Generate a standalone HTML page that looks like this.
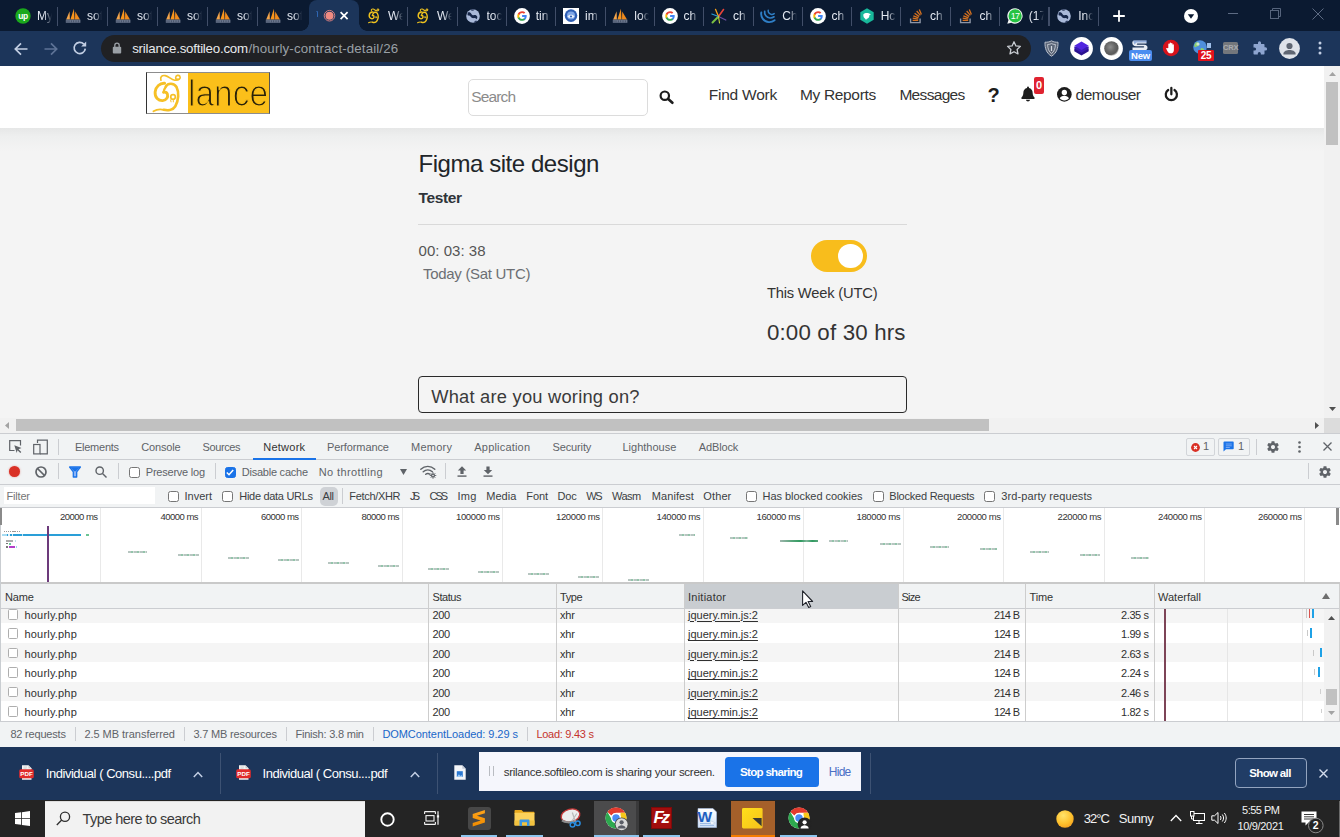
<!DOCTYPE html>
<html lang="en">
<head>
<meta charset="utf-8">
<title>Figma site design</title>
<style>
*{box-sizing:border-box;margin:0;padding:0}
html,body{width:1340px;height:837px;overflow:hidden;background:#fff}
body{position:relative;font-family:"Liberation Sans",sans-serif;font-size:12px;color:#333}
.abs{position:absolute}
svg{position:absolute;overflow:visible}
/* ===== browser chrome ===== */
#tabstrip{position:absolute;left:0;top:0;width:1340px;height:32px;background:#0b1a31}
#toolbar{position:absolute;left:0;top:31px;width:1340px;height:35px;background:#1c355a}
#omni{position:absolute;left:101px;top:35px;width:930px;height:27px;border-radius:14px;background:#202124}
.tt{position:absolute;top:7px;font-size:12px;color:#e4e9f2;white-space:nowrap;overflow:hidden;height:18px;line-height:18px;width:15px;
 -webkit-mask-image:linear-gradient(90deg,#000 0,#000 45%,transparent 100%);mask-image:linear-gradient(90deg,#000 0,#000 45%,transparent 100%)}
.sep{position:absolute;top:7px;width:1.200px;height:18.500px;background:#414e68}
.fav{position:absolute;top:8px;width:16px;height:16px}
#acttab{position:absolute;left:309px;top:0;width:50px;height:32px;background:#1c355a;border-radius:8px 8px 0 0}
#acttab:before,#acttab:after{content:"";position:absolute;bottom:1px;width:8px;height:8px}
#acttab:before{left:-8px;background:radial-gradient(circle at 0 0,transparent 7.5px,#1c355a 8px)}
#acttab:after{right:-8px;background:radial-gradient(circle at 100% 0,transparent 7.5px,#1c355a 8px)}
/* ===== page ===== */
#page{position:absolute;left:0;top:66px;width:1325px;height:352px;background:#f4f4f4;overflow:hidden}
#phead{position:absolute;left:0;top:0;width:1325px;height:62px;background:#fff}
#vscroll{position:absolute;left:1324px;top:66px;width:16px;height:352px;background:#f1f1f1}
#hscroll{position:absolute;left:0;top:418px;width:1340px;height:16px;background:#f1f1f1}
/* ===== devtools ===== */
#dev{position:absolute;left:0;top:433px;width:1340px;height:313px;background:#f3f3f3;color:#333}
/* ===== downloads ===== */
#dl{position:absolute;left:0;top:746.500px;width:1340px;height:54px;background:#1c355a}
/* ===== taskbar ===== */
#task{position:absolute;left:0;top:800px;width:1340px;height:37px;background:#242424}
</style>
</head>
<body>
<div id="tabstrip"></div>
<div id="toolbar"></div>
<div id="acttab"></div>
<svg class="fav" style="left:15px" viewBox="0 0 16 16"><circle cx="8" cy="8" r="7.7" fill="#1aa81c"/><text x="8" y="10.6" font-family="Liberation Sans,sans-serif" font-size="8.5" font-weight="700" fill="#fff" text-anchor="middle" letter-spacing="-0.4">up</text></svg><div class="tt" style="left:37px">My</div>
<svg class="fav" style="left:65px" viewBox="0 0 16 16"><path d="M1.2 11.5 L4.6 3.2 L4.9 11.5Z" fill="#f5a54a"/><path d="M5.4 11.5 L8.9 0.8 L9.6 11.5Z" fill="#f7941d"/><path d="M10 11.5 L10.2 3.6 L15 11.5Z" fill="#f08a1c"/><rect x="0.8" y="11.6" width="14.6" height="3.2" fill="#7d879c" opacity=".85"/><path d="M2 12.3v2M4 12.3v2M6.4 12.3v2M8.6 12.3v2M11 12.3v2M13.4 12.3v2" stroke="#0b1a31" stroke-width=".7" opacity=".55"/></svg><div class="tt" style="left:87px">sof</div>
<svg class="fav" style="left:115px" viewBox="0 0 16 16"><path d="M1.2 11.5 L4.6 3.2 L4.9 11.5Z" fill="#f5a54a"/><path d="M5.4 11.5 L8.9 0.8 L9.6 11.5Z" fill="#f7941d"/><path d="M10 11.5 L10.2 3.6 L15 11.5Z" fill="#f08a1c"/><rect x="0.8" y="11.6" width="14.6" height="3.2" fill="#7d879c" opacity=".85"/><path d="M2 12.3v2M4 12.3v2M6.4 12.3v2M8.6 12.3v2M11 12.3v2M13.4 12.3v2" stroke="#0b1a31" stroke-width=".7" opacity=".55"/></svg><div class="tt" style="left:137px">sof</div>
<svg class="fav" style="left:165px" viewBox="0 0 16 16"><path d="M1.2 11.5 L4.6 3.2 L4.9 11.5Z" fill="#f5a54a"/><path d="M5.4 11.5 L8.9 0.8 L9.6 11.5Z" fill="#f7941d"/><path d="M10 11.5 L10.2 3.6 L15 11.5Z" fill="#f08a1c"/><rect x="0.8" y="11.6" width="14.6" height="3.2" fill="#7d879c" opacity=".85"/><path d="M2 12.3v2M4 12.3v2M6.4 12.3v2M8.6 12.3v2M11 12.3v2M13.4 12.3v2" stroke="#0b1a31" stroke-width=".7" opacity=".55"/></svg><div class="tt" style="left:187px">sof</div>
<svg class="fav" style="left:215px" viewBox="0 0 16 16"><path d="M1.2 11.5 L4.6 3.2 L4.9 11.5Z" fill="#f5a54a"/><path d="M5.4 11.5 L8.9 0.8 L9.6 11.5Z" fill="#f7941d"/><path d="M10 11.5 L10.2 3.6 L15 11.5Z" fill="#f08a1c"/><rect x="0.8" y="11.6" width="14.6" height="3.2" fill="#7d879c" opacity=".85"/><path d="M2 12.3v2M4 12.3v2M6.4 12.3v2M8.6 12.3v2M11 12.3v2M13.4 12.3v2" stroke="#0b1a31" stroke-width=".7" opacity=".55"/></svg><div class="tt" style="left:237px">sof</div>
<svg class="fav" style="left:265px" viewBox="0 0 16 16"><path d="M1.2 11.5 L4.6 3.2 L4.9 11.5Z" fill="#f5a54a"/><path d="M5.4 11.5 L8.9 0.8 L9.6 11.5Z" fill="#f7941d"/><path d="M10 11.5 L10.2 3.6 L15 11.5Z" fill="#f08a1c"/><rect x="0.8" y="11.6" width="14.6" height="3.2" fill="#7d879c" opacity=".85"/><path d="M2 12.3v2M4 12.3v2M6.4 12.3v2M8.6 12.3v2M11 12.3v2M13.4 12.3v2" stroke="#0b1a31" stroke-width=".7" opacity=".55"/></svg><div class="tt" style="left:287px">sof</div>
<svg class="fav" style="left:366px" viewBox="120 50 620 760" fill="none" stroke="#efc21e" stroke-linecap="round" stroke-linejoin="round"><path d="M308 185C288 120 330 92 385 102C455 115 490 178 560 186C640 195 672 150 652 115C632 84 580 95 576 136" stroke-width="50"/><path d="M375 242C290 236 212 300 202 400C195 500 262 560 340 556C412 551 442 490 426 440C416 410 386 394 356 405" stroke-width="70"/><path d="M356 405C360 368 372 338 400 300" stroke-width="55"/><path d="M398 300C432 238 542 228 592 310C640 400 630 560 570 660C530 725 440 745 360 725" stroke-width="68"/><path d="M360 725C290 708 230 716 172 750" stroke-width="50"/><circle cx="528" cy="490" r="36" stroke-width="36"/></svg><div class="tt" style="left:388px">We</div>
<svg class="fav" style="left:415px" viewBox="120 50 620 760" fill="none" stroke="#efc21e" stroke-linecap="round" stroke-linejoin="round"><path d="M308 185C288 120 330 92 385 102C455 115 490 178 560 186C640 195 672 150 652 115C632 84 580 95 576 136" stroke-width="50"/><path d="M375 242C290 236 212 300 202 400C195 500 262 560 340 556C412 551 442 490 426 440C416 410 386 394 356 405" stroke-width="70"/><path d="M356 405C360 368 372 338 400 300" stroke-width="55"/><path d="M398 300C432 238 542 228 592 310C640 400 630 560 570 660C530 725 440 745 360 725" stroke-width="68"/><path d="M360 725C290 708 230 716 172 750" stroke-width="50"/><circle cx="528" cy="490" r="36" stroke-width="36"/></svg><div class="tt" style="left:437px">We</div>
<svg class="fav" style="left:464.5px" viewBox="0 0 16 16"><circle cx="8" cy="8" r="6.800" fill="#a9b9d9"/><path d="M3.200 4.300c1.600-.2 2.700.5 3.200 1.600.5 1.100 1.700 1.400 2.900 1.200 1.400-.2 2.500.4 2.900 1.500.3.900 0 1.900-.7 2.600-.5-.8-1.400-1.200-2.500-1.100-1.500.2-2.700-.3-3.300-1.400-.5-1-1.500-1.400-2.800-1.100-.6-.9-.5-2.300.3-3.300z" fill="#16274a"/><path d="M5.500 1.800c1.300-.5 2.700-.5 3.900-.1-.4.800-1.200 1.200-2.100 1.100-.8-.1-1.400-.5-1.800-1zM9.800 13c.9-.4 1.900-.3 2.600.2-.9.800-1.900 1.300-3.100 1.500-.1-.7.100-1.300.5-1.700z" fill="#16274a" opacity=".85"/></svg><div class="tt" style="left:486.5px">toc</div>
<svg class="fav" style="left:513.7px" viewBox="0 0 16 16"><circle cx="8" cy="8" r="7.900" fill="#fff"/><path d="M12.700 8.100c0-.35-.03-.68-.09-1H8.100v1.900h2.600c-.11.600-.45 1.110-.96 1.450v1.200h1.550c.91-.84 1.410-2.070 1.410-3.550z" fill="#4285f4"/><path d="M8.100 12.800c1.300 0 2.380-.43 3.180-1.150l-1.550-1.200c-.43.290-.98.460-1.630.460-1.250 0-2.310-.85-2.690-1.980H3.800v1.240c.79 1.570 2.410 2.630 4.300 2.630z" fill="#34a853"/><path d="M5.410 8.930c-.1-.29-.15-.6-.15-.93s.05-.64.150-.93V5.830H3.800c-.33.650-.51 1.390-.51 2.170s.18 1.520.51 2.170l1.610-1.240z" fill="#fbbc05"/><path d="M8.100 5.090c.71 0 1.340.24 1.840.72l1.380-1.380C10.480 3.650 9.400 3.200 8.100 3.200c-1.890 0-3.510 1.060-4.300 2.630l1.610 1.240c.38-1.130 1.440-1.980 2.690-1.980z" fill="#ea4335"/></svg><div class="tt" style="left:535.7px">tin</div>
<svg class="fav" style="left:563px" viewBox="0 0 16 16"><rect x="0" y="0" width="16" height="16" fill="#fff"/><circle cx="8" cy="7.600" r="6.300" fill="#2f5fb5"/><circle cx="8" cy="7.600" r="4" fill="#7fa6e6"/><path d="M4.500 8.500c1.500-2.500 5.500-2.500 7 0-1.500 2-5.500 2-7 0z" fill="#e9f0fb"/><circle cx="8" cy="8.500" r="1.100" fill="#2f5fb5"/></svg><div class="tt" style="left:585px">im</div>
<svg class="fav" style="left:612.3px" viewBox="0 0 16 16"><path d="M1.2 11.5 L4.6 3.2 L4.9 11.5Z" fill="#f5a54a"/><path d="M5.4 11.5 L8.9 0.8 L9.6 11.5Z" fill="#f7941d"/><path d="M10 11.5 L10.2 3.6 L15 11.5Z" fill="#f08a1c"/><rect x="0.8" y="11.6" width="14.6" height="3.2" fill="#7d879c" opacity=".85"/><path d="M2 12.3v2M4 12.3v2M6.4 12.3v2M8.6 12.3v2M11 12.3v2M13.4 12.3v2" stroke="#0b1a31" stroke-width=".7" opacity=".55"/></svg><div class="tt" style="left:634.3px">loc</div>
<svg class="fav" style="left:661.5px" viewBox="0 0 16 16"><circle cx="8" cy="8" r="7.900" fill="#fff"/><path d="M12.700 8.100c0-.35-.03-.68-.09-1H8.100v1.900h2.600c-.11.600-.45 1.110-.96 1.450v1.200h1.550c.91-.84 1.410-2.070 1.410-3.550z" fill="#4285f4"/><path d="M8.100 12.800c1.300 0 2.380-.43 3.180-1.150l-1.550-1.200c-.43.290-.98.460-1.630.460-1.250 0-2.310-.85-2.690-1.980H3.800v1.240c.79 1.570 2.410 2.630 4.300 2.630z" fill="#34a853"/><path d="M5.410 8.930c-.1-.29-.15-.6-.15-.93s.05-.64.150-.93V5.830H3.800c-.33.650-.51 1.390-.51 2.170s.18 1.520.51 2.170l1.610-1.240z" fill="#fbbc05"/><path d="M8.100 5.090c.71 0 1.340.24 1.840.72l1.380-1.380C10.480 3.650 9.400 3.200 8.100 3.200c-1.890 0-3.510 1.060-4.300 2.630l1.610 1.240c.38-1.130 1.440-1.980 2.690-1.980z" fill="#ea4335"/></svg><div class="tt" style="left:683.5px">ch</div>
<svg class="fav" style="left:711px" viewBox="0 0 16 16" fill="none" stroke-linecap="round"><path d="M7.500 8.500L1.500 14.500" stroke="#7ac143" stroke-width="2"/><path d="M7.500 8.500L14.800 12" stroke="#6b4fa0" stroke-width="1.300"/><path d="M7.500 8.500L12.500 1.500" stroke="#e8443a" stroke-width="1.600"/><path d="M7.500 8.500L4.500 1.300" stroke="#f6a01a" stroke-width="1.300"/><path d="M7.500 8.500L0.800 6" stroke="#2a9fd8" stroke-width="1.100"/><path d="M7.500 8.500L8.500 15" stroke="#c6d93b" stroke-width="1.100"/></svg><div class="tt" style="left:733px">ch</div>
<svg class="fav" style="left:760.3px" viewBox="0 0 16 16" fill="none" stroke="#2f7fc6" stroke-linecap="round"><path d="M1.300 4.500c-.9 4.500 2.500 9.300 7.400 9.600 2.300.2 4.300-.6 5.900-1.900" stroke-width="1.900"/><path d="M4.700 3.300c-.6 3.300 1.900 6.400 5.200 6.700 1.500.1 2.900-.3 4.100-1.200" stroke-width="1.700"/><path d="M8.200 2.300c-.3 2.100 1.300 3.900 3.300 4.100 1 .1 1.900-.2 2.700-.8" stroke-width="1.500"/></svg><div class="tt" style="left:782.3px">Ch</div>
<svg class="fav" style="left:809.5px" viewBox="0 0 16 16"><circle cx="8" cy="8" r="7.900" fill="#fff"/><path d="M12.700 8.100c0-.35-.03-.68-.09-1H8.100v1.900h2.600c-.11.600-.45 1.110-.96 1.450v1.200h1.550c.91-.84 1.410-2.070 1.410-3.550z" fill="#4285f4"/><path d="M8.100 12.800c1.300 0 2.380-.43 3.180-1.150l-1.550-1.200c-.43.290-.98.460-1.630.460-1.250 0-2.310-.85-2.690-1.980H3.800v1.240c.79 1.570 2.410 2.630 4.300 2.630z" fill="#34a853"/><path d="M5.410 8.930c-.1-.29-.15-.6-.15-.93s.05-.64.150-.93V5.830H3.800c-.33.650-.51 1.390-.51 2.170s.18 1.520.51 2.170l1.610-1.240z" fill="#fbbc05"/><path d="M8.100 5.090c.71 0 1.340.24 1.840.72l1.380-1.380C10.480 3.650 9.400 3.200 8.100 3.200c-1.890 0-3.510 1.060-4.300 2.630l1.610 1.240c.38-1.130 1.440-1.980 2.690-1.980z" fill="#ea4335"/></svg><div class="tt" style="left:831.5px">ch</div>
<svg class="fav" style="left:858.7px" viewBox="0 0 16 16"><path d="M8 .3l6.700 3.850v7.700L8 15.700 1.300 11.850v-7.700z" fill="#18b89b"/><path d="M4.300 6.400c1.300-1.400 3.600-1.800 5.300-1.100l2.300.9-1.500 1c.2 1.900-1.100 3.500-3 3.800l-.2 1.300-1-1.600c-1.200-.7-2-2.300-1.900-4.300z" fill="#fff"/></svg><div class="tt" style="left:880.7px">Hc</div>
<svg class="fav" style="left:908px" viewBox="0 0 16 16" fill="none"><path d="M2.600 10.400v4.200h9.500v-4.200" stroke="#8d95a6" stroke-width="1.400"/><path d="M4.600 12.400h5.600" stroke="#d5711f" stroke-width="1.300"/><path d="M4.700 10.200l5.500.9" stroke="#d5711f" stroke-width="1.300"/><path d="M5.300 7.800l5.200 2.100" stroke="#d5711f" stroke-width="1.300"/><path d="M6.600 5.300l4.600 3.300" stroke="#d5711f" stroke-width="1.300"/><path d="M8.700 3l3.700 4.400" stroke="#d5711f" stroke-width="1.300"/><path d="M11.300 1.400l2.100 5.200" stroke="#d5711f" stroke-width="1.300"/></svg><div class="tt" style="left:930px">ch</div>
<svg class="fav" style="left:957.5px" viewBox="0 0 16 16" fill="none"><path d="M2.600 10.400v4.200h9.500v-4.200" stroke="#8d95a6" stroke-width="1.400"/><path d="M4.600 12.400h5.600" stroke="#d5711f" stroke-width="1.300"/><path d="M4.700 10.200l5.500.9" stroke="#d5711f" stroke-width="1.300"/><path d="M5.300 7.800l5.200 2.100" stroke="#d5711f" stroke-width="1.300"/><path d="M6.600 5.300l4.600 3.300" stroke="#d5711f" stroke-width="1.300"/><path d="M8.700 3l3.700 4.400" stroke="#d5711f" stroke-width="1.300"/><path d="M11.300 1.400l2.100 5.200" stroke="#d5711f" stroke-width="1.300"/></svg><div class="tt" style="left:979.5px">ch</div>
<svg class="fav" style="left:1006.8px" viewBox="0 0 16 16"><path d="M8.100.2a7.700 7.700 0 0 0-6.600 11.700L.3 15.800l4-1.100A7.700 7.700 0 1 0 8.100.2z" fill="#f2f5f3"/><circle cx="8.100" cy="7.900" r="6.600" fill="#25c343"/><text x="8.100" y="10.700" font-family="Liberation Sans,sans-serif" font-size="9" fill="#fff" text-anchor="middle" letter-spacing="-0.6">17</text></svg><div class="tt" style="left:1028.8px">(17</div>
<svg class="fav" style="left:1056.2px" viewBox="0 0 16 16"><circle cx="8" cy="8" r="6.800" fill="#a9b9d9"/><path d="M3.200 4.300c1.600-.2 2.700.5 3.200 1.600.5 1.100 1.700 1.400 2.900 1.200 1.400-.2 2.500.4 2.900 1.500.3.900 0 1.900-.7 2.600-.5-.8-1.400-1.200-2.500-1.100-1.500.2-2.700-.3-3.300-1.400-.5-1-1.500-1.400-2.800-1.100-.6-.9-.5-2.300.3-3.300z" fill="#16274a"/><path d="M5.500 1.800c1.300-.5 2.700-.5 3.900-.1-.4.800-1.200 1.200-2.100 1.100-.8-.1-1.400-.5-1.800-1zM9.800 13c.9-.4 1.900-.3 2.600.2-.9.800-1.900 1.300-3.100 1.500-.1-.7.100-1.300.5-1.700z" fill="#16274a" opacity=".85"/></svg><div class="tt" style="left:1078.2px">Inc</div>
<div class="sep" style="left:57.2px"></div><div class="sep" style="left:107.2px"></div><div class="sep" style="left:157.2px"></div><div class="sep" style="left:207.2px"></div><div class="sep" style="left:257.2px"></div><div class="sep" style="left:407.2px"></div><div class="sep" style="left:456.7px"></div><div class="sep" style="left:505.9px"></div><div class="sep" style="left:555.2px"></div><div class="sep" style="left:604.5px"></div><div class="sep" style="left:653.7px"></div><div class="sep" style="left:703.2px"></div><div class="sep" style="left:752.5px"></div><div class="sep" style="left:801.7px"></div><div class="sep" style="left:850.9px"></div><div class="sep" style="left:900.2px"></div><div class="sep" style="left:949.7px"></div><div class="sep" style="left:999.0px"></div><div class="sep" style="left:1048.4px"></div><div class="sep" style="left:1097.7px"></div>
<div class="abs" style="left:316.600px;top:10.700px;width:1.700px;height:6.300px;background:#2f66b3;border-radius:.5px"></div><div class="abs" style="left:315.800px;top:10.700px;width:1.500px;height:1.500px;background:#2f66b3;opacity:.6"></div>
<svg style="left:322px;top:8px;width:16px;height:16px" viewBox="0 0 16 16"><circle cx="7.500" cy="7.700" r="5.300" fill="none" stroke="#d97e80" stroke-width="1"/><circle cx="7.500" cy="7.700" r="4" fill="#f28b82"/></svg>
<svg style="left:336px;top:8px;width:16px;height:16px" viewBox="0 0 16 16"><path d="M4.600 4.200l7 7M11.600 4.200l-7 7" stroke="#fff" stroke-width="1.700" fill="none"/></svg>
<svg style="left:1112px;top:9px;width:14px;height:14px" viewBox="0 0 14 14"><path d="M7 1.200v11.600M1.200 7h11.600" stroke="#fff" stroke-width="1.800" fill="none"/></svg>
<svg style="left:1184px;top:9px;width:14px;height:14px" viewBox="0 0 14 14"><circle cx="7" cy="7" r="7" fill="#fff"/><path d="M3.800 5.300h6.400L7 9.700z" fill="#0b1a31"/></svg>
<div class="abs" style="left:1228px;top:13px;width:10px;height:1px;background:#5d6b83"></div>
<svg style="left:1270px;top:8px;width:11px;height:11px" viewBox="0 0 11 11" fill="none" stroke="#56647c" stroke-width="1"><rect x=".5" y="2.500" width="8" height="8"/><path d="M2.500 2.500v-2h8v8h-2"/></svg>
<svg style="left:1312px;top:8px;width:12px;height:12px" viewBox="0 0 12 12"><path d="M.5.500l11 11M11.500.500l-11 11" stroke="#5d6b83" stroke-width="1" fill="none"/></svg>
<svg style="left:13px;top:41px;width:16px;height:16px" viewBox="0 0 16 16" fill="none" stroke="#c3cfe4" stroke-width="1.700"><path d="M14.500 8H2.500M8 2.300L2.300 8 8 13.700"/></svg>
<svg style="left:43px;top:41px;width:16px;height:16px" viewBox="0 0 16 16" fill="none" stroke="#5e7396" stroke-width="1.700"><path d="M1.500 8h12M8 2.300L13.700 8 8 13.700"/></svg>
<svg style="left:72px;top:40px;width:16px;height:16px" viewBox="0 0 16 16" fill="none"><path d="M13.300 8.600A5.600 5.600 0 1 1 11.800 4.100" stroke="#c3cfe4" stroke-width="1.700"/><path d="M14.200 1.600v5h-5z" fill="#c3cfe4"/></svg>
<div id="omni"></div>
<svg style="left:112px;top:42px;width:10px;height:12px" viewBox="0 0 10 12"><rect x=".8" y="4.800" width="8.400" height="6.700" rx="1" fill="#9aa0a6"/><path d="M2.800 5V3.400a2.200 2.200 0 0 1 4.400 0V5" stroke="#9aa0a6" stroke-width="1.300" fill="none"/></svg>
<div class="abs" style="left:132.2px;top:38.6px;font-size:13.3px;line-height:19px;height:19px;color:#e8eaed;white-space:nowrap;letter-spacing:-0.23px;">srilance.softileo.com</div><div class="abs" style="left:248.5px;top:38.6px;font-size:13.3px;line-height:19px;height:19px;color:#9aa0a6;white-space:nowrap;letter-spacing:0.13px;">/hourly-contract-detail/26</div>
<svg style="left:1006px;top:40px;width:16px;height:16px" viewBox="0 0 16 16"><path d="M8 1.800l1.900 4.100 4.500.5-3.300 3.100.9 4.400L8 11.700 4 13.900l.9-4.400L1.600 6.400l4.500-.5z" fill="none" stroke="#c9cdd3" stroke-width="1.300" stroke-linejoin="round"/></svg>
<svg style="left:1044px;top:40px;width:15px;height:17px" viewBox="0 0 15 17"><path d="M7.500 .8C5.500 2 3.300 2.300 1 2.200c-.2 5.800 1.300 11 6.500 14 5.200-3 6.700-8.200 6.500-14-2.300.1-4.500-.2-6.500-1.400z" fill="#5b6577" stroke="#b9c0cc" stroke-width="1"/><path d="M7.500 3.600c-1.200.6-2.500.9-3.900.9.100 3.800 1.100 7.100 3.900 9.100 2.800-2 3.800-5.300 3.900-9.100-1.400 0-2.700-.3-3.900-.9z" fill="none" stroke="#d5dae2" stroke-width=".8"/><path d="M7.500 6v5" stroke="#d5dae2" stroke-width="1.200"/></svg>
<svg style="left:1070px;top:37px;width:23px;height:23px" viewBox="0 0 23 23"><circle cx="11.500" cy="11.500" r="11.400" fill="#fff"/><path d="M4.300 14.300l7.200 4.200 7.200-4.200v-2.500H4.300z" fill="#2a1290"/><path d="M4.300 11.600l7.200 4.200 7.200-4.200V9.500H4.300z" fill="#3a1bb5"/><path d="M11.500 4.500l7.200 4.200-7.200 4.200-7.200-4.200z" fill="#5126e0"/></svg>
<svg style="left:1100px;top:37px;width:23px;height:23px" viewBox="0 0 23 23"><defs><radialGradient id="gb" cx=".42" cy=".4" r=".6"><stop offset="0" stop-color="#8f8f8f"/><stop offset=".55" stop-color="#666"/><stop offset=".85" stop-color="#5a5a5a"/><stop offset="1" stop-color="#bdbdbd"/></radialGradient></defs><circle cx="11.500" cy="11.500" r="11.400" fill="#fff"/><circle cx="11.500" cy="11.500" r="7.300" fill="url(#gb)"/></svg>
<svg style="left:1131px;top:40px;width:18px;height:11px" viewBox="0 0 18 11"><path d="M3 .5h12.500v3H6.500c-1 0-1 1.300 0 1.300h7c4 0 4 5.700 0 5.700H1.500v-3h11c1 0 1-1.300 0-1.300H5C.5 6.200.5.500 3 .5z" fill="#e9edf5"/><path d="M2 .5h14v2H5.500l-2 2z" fill="#3d6fc4" opacity=".5"/></svg>
<div class="abs" style="left:1129px;top:50px;width:23px;height:11px;background:#4b8df0;border-radius:2px;color:#fff;font-size:9.500px;font-weight:700;line-height:11px;text-align:center;letter-spacing:-.2px">New</div>
<svg style="left:1162px;top:39px;width:18px;height:18px" viewBox="0 0 18 18"><circle cx="9" cy="9" r="8.200" fill="#d8121b"/><path d="M6.300 9V5.300a.7.7 0 0 1 1.400 0V8.300V4.200a.7.700 0 0 1 1.400 0V8V4.600a.7.700 0 0 1 1.400 0V8.400V5.900a.7.700 0 0 1 1.400 0v5c0 2-1.200 3.400-3.200 3.400-1.500 0-2.400-.7-3.100-1.900l-1.400-2.600c-.3-.6.600-1.200 1.100-.6z" fill="#fff"/></svg>
<svg style="left:1193px;top:40px;width:14px;height:14px" viewBox="0 0 14 14"><circle cx="7" cy="7" r="6.800" fill="#4f8fdc"/><path d="M3 2.500c1.500-.5 3 .3 3.300 1.500.3 1.200-.8 2-1.900 2.200C3.300 6.400 2.700 7.500 1.500 7 1 5.500 1.600 3.500 3 2.500zM8 8c1.500-.3 3 .5 3.200 1.800-.7 1.300-1.700 2.200-3.200 2.700-.7-1.400-.8-3.200 0-4.500z" fill="#8fd16a"/><circle cx="5" cy="4" r="1.600" fill="#e6f2ff" opacity=".7"/></svg>
<div class="abs" style="left:1207px;top:43px;width:4px;height:5px;background:#9fc0ea;font-size:0"></div>
<div class="abs" style="left:1198px;top:50px;width:16px;height:11px;background:#e1121c;border-radius:1px;color:#fff;font-size:10px;font-weight:700;line-height:11px;text-align:center;letter-spacing:-.3px">25</div>
<div class="abs" style="left:1223px;top:42px;width:15px;height:12px;background:#74777c;border-radius:1.500px;color:#a9acb1;font-size:7.500px;font-weight:700;line-height:12px;text-align:center;letter-spacing:-.2px">CRX</div>
<svg style="left:1252px;top:41px;width:15px;height:15px" viewBox="0 0 15 15"><path d="M6 1.700a1.500 1.500 0 0 1 3 0V3h2.800c.4 0 .7.300.7.700V6.300h1a1.600 1.600 0 0 1 0 3.200h-1v3.300c0 .4-.3.700-.7.700H8.800v-1a1.500 1.500 0 0 0-3 0v1H2.200c-.4 0-.7-.3-.7-.7V9.600h1a1.600 1.600 0 0 0 0-3.200h-1V3.700c0-.4.300-.7.700-.7H6z" fill="#8ea5cf"/></svg>
<svg style="left:1279px;top:38px;width:21px;height:21px" viewBox="0 0 21 21"><circle cx="10.500" cy="10.500" r="10.400" fill="#dfe3ea"/><circle cx="10.500" cy="8" r="3.100" fill="#5f6673"/><path d="M4.400 15.700c0-2.600 3.600-3.700 6.100-3.700s6.100 1.100 6.100 3.700v.8H4.400z" fill="#5f6673"/></svg>
<svg style="left:1318px;top:41px;width:4px;height:14px" viewBox="0 0 4 14"><circle cx="2" cy="2" r="1.500" fill="#c3cfe4"/><circle cx="2" cy="7" r="1.500" fill="#c3cfe4"/><circle cx="2" cy="12" r="1.500" fill="#c3cfe4"/></svg>
<div id="page"><div class="abs" style="left:0;top:-66px;width:1325px;height:484px">
<div class="abs" style="left:0;top:128px;width:1325px;height:24px;background:linear-gradient(#e6e7e7,#eeefef 35%,#f4f4f4)"></div><div class="abs" style="left:0;top:66px;width:1325px;height:62.300px;background:#fff"></div>
<div class="abs" style="left:146px;top:72px;width:124px;height:42px;border:1px solid #8d8d8d;border-left:1.500px solid #333;border-right-color:#555;background:#fff;overflow:hidden">
 <div class="abs" style="left:40.800px;top:0;width:84px;height:40px;background:#fbbf1a"></div>
 <svg style="left:-3px;top:-3px;width:48px;height:46px" viewBox="0 0 873 837" fill="none" stroke="#f6c026" stroke-linecap="round" stroke-linejoin="round"><path d="M308 185C288 120 330 92 385 102C455 115 490 178 560 186C640 195 672 150 652 115C632 84 580 95 576 136C573 166 602 180 622 164" stroke-width="30"/><path d="M375 242C290 236 212 300 202 400C195 500 262 560 340 556C412 551 442 490 426 440C416 410 386 394 356 405" stroke-width="52"/><path d="M356 405C360 368 372 338 400 300" stroke-width="40"/><path d="M398 300C432 238 542 228 592 310C640 400 630 560 570 660C530 725 440 745 360 725" stroke-width="48"/><path d="M360 725C290 708 230 716 172 750" stroke-width="34"/><circle cx="528" cy="490" r="42" stroke-width="30"/><path d="M484 545L492 580M532 548L534 580" stroke-width="18"/></svg>
 <div class="abs" id="lance" style="left:40.500px;top:.5px;height:40px;line-height:40px;font-size:36px;color:#2a2209;white-space:nowrap;transform-origin:0 50%;transform:scaleX(.93);-webkit-text-stroke:1.200px #fbbf1a">lance</div>
</div>
<div class="abs" style="left:468px;top:79px;width:180px;height:37px;border:1px solid #dcdcdc;border-radius:5px;background:#fff"></div><div class="abs" style="left:471.3px;top:86.1px;font-size:15.5px;line-height:22px;height:22px;color:#8b8b8b;white-space:nowrap;letter-spacing:-0.88px;">Search</div><svg style="left:659px;top:89.700px;width:15px;height:14px" viewBox="0 0 15 14" fill="none" stroke="#1d1d1d"><circle cx="5.800" cy="5.700" r="4.200" stroke-width="2.200"/><path d="M9.200 9l4.200 3.700" stroke-width="2.700" stroke-linecap="round"/></svg>
<div class="abs" style="left:708.7px;top:83.6px;font-size:15.5px;line-height:22px;height:22px;color:#333;white-space:nowrap;letter-spacing:-0.22px;">Find Work</div><div class="abs" style="left:800.0px;top:83.6px;font-size:15.5px;line-height:22px;height:22px;color:#333;white-space:nowrap;letter-spacing:-0.34px;">My Reports</div><div class="abs" style="left:899.4px;top:83.6px;font-size:15.5px;line-height:22px;height:22px;color:#333;white-space:nowrap;letter-spacing:-0.68px;">Messages</div><div class="abs" style="left:1075.6px;top:83.6px;font-size:15.5px;line-height:22px;height:22px;color:#333;white-space:nowrap;letter-spacing:-0.50px;">demouser</div><div class="abs" style="left:987.5px;top:80.6px;font-size:20px;line-height:28px;height:28px;color:#1d1d1d;white-space:nowrap;letter-spacing:0.00px;font-weight:700;">?</div><svg style="left:1021px;top:86px;width:14px;height:15.500px" viewBox="0 0 14 16"><path d="M7 .5c.6 0 1 .4 1 1v.6c2.300.5 3.800 2.400 3.800 4.900 0 2.500.8 3.700 1.700 4.600.3.300.4.600.4.900 0 .5-.4 1-1 1H1.100c-.6 0-1-.5-1-1 0-.3.100-.6.400-.9.900-.9 1.700-2.100 1.700-4.600 0-2.500 1.500-4.400 3.800-4.900v-.6c0-.6.400-1 1-1zM5 14.200h4c0 1-.9 1.800-2 1.800s-2-.8-2-1.800z" fill="#1d1d1d"/></svg>
<div class="abs" style="left:1034px;top:77px;width:10px;height:16.600px;background:#e02330;border-radius:2px"></div>
<svg style="left:1056.500px;top:87px;width:14.700px;height:14.700px" viewBox="0 0 15 15"><circle cx="7.500" cy="7.500" r="7.500" fill="#1d1d1d"/><circle cx="7.500" cy="5.600" r="2.700" fill="#fff"/><path d="M2.800 11.600c.7-1.700 2.500-2.600 4.700-2.600s4 .9 4.700 2.600c-1.100 1.400-2.800 2.200-4.700 2.200s-3.600-.8-4.700-2.200z" fill="#fff"/></svg>
<svg style="left:1164px;top:87px;width:14.700px;height:14.700px" viewBox="0 0 15 15" fill="none" stroke="#1d1d1d" stroke-width="2.300" stroke-linecap="round"><path d="M4.300 3.100A5.700 5.700 0 1 0 10.700 3.100"/><path d="M7.500 1v6.500"/></svg>
<div class="abs" style="left:1036.0px;top:78.0px;font-size:11px;line-height:15px;height:15px;color:#fff;white-space:nowrap;letter-spacing:0.00px;font-weight:700;">0</div>
<div class="abs" style="left:418.5px;top:146.5px;font-size:24px;line-height:34px;height:34px;color:#212529;white-space:nowrap;letter-spacing:-0.45px;">Figma site design</div><div class="abs" style="left:418.5px;top:186.5px;font-size:15.5px;line-height:22px;height:22px;color:#2f343a;white-space:nowrap;letter-spacing:-0.37px;font-weight:700;">Tester</div><div class="abs" style="left:418px;top:223.800px;width:489px;height:1px;background:#d9d9d9"></div><div class="abs" style="left:418.5px;top:240.2px;font-size:15px;line-height:21px;height:21px;color:#555;white-space:nowrap;letter-spacing:0.04px;">00: 03: 38</div><div class="abs" style="left:423.0px;top:262.5px;font-size:15px;line-height:21px;height:21px;color:#6c6f73;white-space:nowrap;letter-spacing:-0.30px;">Today (Sat UTC)</div><div class="abs" style="left:810.500px;top:239.700px;width:56px;height:32.200px;border-radius:16.100px;background:#f8bd1c"></div><div class="abs" style="left:838.200px;top:243.500px;width:24.600px;height:24.600px;border-radius:50%;background:#fff"></div><div class="abs" style="left:766.9px;top:282.9px;font-size:14.7px;line-height:21px;height:21px;color:#333;white-space:nowrap;letter-spacing:-0.18px;">This Week (UTC)</div><div class="abs" style="left:766.9px;top:317.1px;font-size:22.3px;line-height:31px;height:31px;color:#333;white-space:nowrap;letter-spacing:0.17px;">0:00 of 30 hrs</div><div class="abs" style="left:418px;top:376px;width:489px;height:36.700px;border:1.500px solid #2a2a2a;border-radius:4px"></div><div class="abs" style="left:431.2px;top:384.4px;font-size:18.3px;line-height:26px;height:26px;color:#3a3a3a;white-space:nowrap;letter-spacing:0.23px;">What are you woring on?</div>
</div></div>
<div id="vscroll">
 <div class="abs" style="left:2px;top:16px;width:12px;height:63px;background:#c1c1c1"></div>
 <svg style="left:4.500px;top:6px;width:7px;height:4px" viewBox="0 0 7 4"><path d="M0 4L3.500 0 7 4z" fill="#a3a3a3"/></svg>
 <svg style="left:4.500px;top:341px;width:7px;height:4px" viewBox="0 0 7 4"><path d="M0 0L3.500 4 7 0z" fill="#505050"/></svg>
</div>
<div id="hscroll">
 <div class="abs" style="left:16px;top:1.300px;width:973px;height:11.700px;background:#c1c1c1"></div>
 <svg style="left:5.200px;top:4px;width:4px;height:7px" viewBox="0 0 4 7"><path d="M4 0L0 3.500 4 7z" fill="#a3a3a3"/></svg>
 <svg style="left:1315px;top:4px;width:4px;height:7px" viewBox="0 0 4 7"><path d="M0 0L4 3.500 0 7z" fill="#505050"/></svg>
 <div class="abs" style="left:1324px;top:0;width:16px;height:16px;background:#dcdcdc"></div>
</div>
<div id="dev"></div>
<div class="abs" style="left:0;top:433px;width:1340px;height:1px;background:#cbcdd1"></div><div class="abs" style="left:0;top:459px;width:1340px;height:1px;background:#cbcdd1"></div><div class="abs" style="left:0;top:483.500px;width:1340px;height:1px;background:#cbcdd1"></div><div class="abs" style="left:0;top:507px;width:1340px;height:1px;background:#cbcdd1"></div>
<svg style="left:9px;top:440px;width:14px;height:14px" viewBox="0 0 14 14" fill="none" stroke="#5f6368" stroke-width="1.200"><path d="M5.500 10.500H.7V.7h10.800v4.800"/><path d="M5.300 5.300l7.200 2.700-3 1.300 2.800 2.800-1 1-2.800-2.800L7.700 13z" fill="#5f6368" stroke="none"/></svg>
<svg style="left:33px;top:439px;width:15px;height:16px" viewBox="0 0 15 16" fill="none" stroke="#5f6368" stroke-width="1.200"><path d="M4.500 4V1.100h9.800v13.800H7"/><rect x=".7" y="5.500" width="6.300" height="9.400"/></svg>
<div class="abs" style="left:58px;top:439px;width:1px;height:16px;background:#cbcdd1"></div>
<div class="abs" style="left:75.0px;top:439.5px;font-size:11px;line-height:15px;height:15px;color:#5f6368;white-space:nowrap;letter-spacing:-0.26px;">Elements</div><div class="abs" style="left:141.3px;top:439.5px;font-size:11px;line-height:15px;height:15px;color:#5f6368;white-space:nowrap;letter-spacing:-0.19px;">Console</div><div class="abs" style="left:202.5px;top:439.5px;font-size:11px;line-height:15px;height:15px;color:#5f6368;white-space:nowrap;letter-spacing:-0.39px;">Sources</div><div class="abs" style="left:263.3px;top:439.5px;font-size:11px;line-height:15px;height:15px;color:#333;white-space:nowrap;letter-spacing:0.23px;">Network</div><div class="abs" style="left:327.0px;top:439.5px;font-size:11px;line-height:15px;height:15px;color:#5f6368;white-space:nowrap;letter-spacing:-0.10px;">Performance</div><div class="abs" style="left:411.0px;top:439.5px;font-size:11px;line-height:15px;height:15px;color:#5f6368;white-space:nowrap;letter-spacing:0.26px;">Memory</div><div class="abs" style="left:474.3px;top:439.5px;font-size:11px;line-height:15px;height:15px;color:#5f6368;white-space:nowrap;letter-spacing:0.19px;">Application</div><div class="abs" style="left:552.5px;top:439.5px;font-size:11px;line-height:15px;height:15px;color:#5f6368;white-space:nowrap;letter-spacing:-0.13px;">Security</div><div class="abs" style="left:622.5px;top:439.5px;font-size:11px;line-height:15px;height:15px;color:#5f6368;white-space:nowrap;letter-spacing:-0.00px;">Lighthouse</div><div class="abs" style="left:698.8px;top:439.5px;font-size:11px;line-height:15px;height:15px;color:#5f6368;white-space:nowrap;letter-spacing:-0.14px;">AdBlock</div>
<div class="abs" style="left:252.500px;top:457.500px;width:63.500px;height:2px;background:#1a73e8"></div>
<div class="abs" style="left:1185.500px;top:437.500px;width:29px;height:18px;border:1px solid #d2d5d9;border-radius:2px"></div>
<svg style="left:1190.500px;top:442.500px;width:9px;height:9px" viewBox="0 0 9 9"><circle cx="4.500" cy="4.500" r="4.400" fill="#d93025"/><path d="M3 3l3 3M6 3L3 6" stroke="#fff" stroke-width="1.100"/></svg>
<div class="abs" style="left:1217.500px;top:437.500px;width:32px;height:18px;border:1px solid #d2d5d9;border-radius:2px"></div>
<svg style="left:1223px;top:441px;width:11px;height:11px" viewBox="0 0 11 11"><path d="M1.500 .5h8.500c.5 0 .7.300.7.700v6.300c0 .4-.3.700-.7.700H3L.5 10.600V1.200c0-.4.300-.7 1-.7z" fill="#1a73e8"/><path d="M2.800 3h6M2.800 4.800h6M2.800 6.500h4" stroke="#8ab4f8" stroke-width=".8"/></svg>
<div class="abs" style="left:1256px;top:439px;width:1px;height:16px;background:#cbcdd1"></div>
<div class="abs" style="left:1203.0px;top:439.0px;font-size:11px;line-height:15px;height:15px;color:#5f6368;white-space:nowrap;letter-spacing:0.00px;">1</div><div class="abs" style="left:1238.0px;top:439.0px;font-size:11px;line-height:15px;height:15px;color:#5f6368;white-space:nowrap;letter-spacing:0.00px;">1</div><svg style="left:1266px;top:439.5px;width:14px;height:14px" viewBox="0 0 24 24"><path fill="#5f6368" d="M19.430 12.980c.04-.32.070-.64.070-.980s-.03-.660-.070-.980l2.110-1.650c.190-.150.240-.420.120-.640l-2-3.460c-.120-.220-.390-.300-.610-.220l-2.490 1c-.520-.400-1.080-.730-1.690-.980l-.380-2.650C14.460 2.180 14.250 2 14 2h-4c-.250 0-.460.180-.490.420l-.380 2.650c-.610.250-1.170.590-1.690.980l-2.490-1c-.230-.090-.490 0-.610.220l-2 3.460c-.130.220-.070.490.120.640l2.110 1.650c-.04.320-.070.650-.070.980s.03.660.070.980l-2.110 1.650c-.190.150-.240.420-.120.640l2 3.460c.120.220.390.300.610.220l2.490-1c.520.400 1.080.730 1.690.980l.380 2.650c.03.240.240.420.490.420h4c.250 0 .460-.180.490-.420l.380-2.650c.610-.250 1.170-.590 1.690-.980l2.490 1c.230.090.490 0 .610-.220l2-3.460c.120-.220.070-.490-.120-.640l-2.110-1.650zM12 15.500c-1.930 0-3.500-1.570-3.500-3.500s1.570-3.500 3.500-3.500 3.500 1.570 3.500 3.500-1.570 3.500-3.500 3.500z"/></svg><svg style="left:1298px;top:440.500px;width:3px;height:12px" viewBox="0 0 3 12"><circle cx="1.500" cy="1.500" r="1.300" fill="#5f6368"/><circle cx="1.500" cy="6" r="1.300" fill="#5f6368"/><circle cx="1.500" cy="10.500" r="1.300" fill="#5f6368"/></svg>
<svg style="left:1322.500px;top:442px;width:9px;height:9px" viewBox="0 0 9 9"><path d="M.5.500l8 8M8.500.500l-8 8" stroke="#5f6368" stroke-width="1.300" fill="none"/></svg>
<div class="abs" style="left:9px;top:465.800px;width:11px;height:11px;border-radius:50%;background:#d93025;box-shadow:0 0 2px rgba(217,48,37,.5)"></div>
<svg style="left:35px;top:465.500px;width:12px;height:12px" viewBox="0 0 12 12" fill="none" stroke="#5f6368" stroke-width="1.700"><circle cx="6" cy="6" r="5"/><path d="M2.500 2.500l7 7"/></svg>
<div class="abs" style="left:58px;top:463px;width:1px;height:16px;background:#cbcdd1"></div>
<svg style="left:69px;top:466px;width:12px;height:12px" viewBox="0 0 12 12"><path d="M.6 1h10.800L7.700 5.800v5.200H4.300V5.800z" fill="#8ab4f8" stroke="#1a73e8" stroke-width="1.300" stroke-linejoin="round"/><path d="M1.500 1.500h9L6.800 5.300H5.200z" fill="#1a73e8"/></svg>
<svg style="left:95px;top:465.500px;width:12px;height:12px" viewBox="0 0 12 12" fill="none" stroke="#5f6368" stroke-width="1.400"><circle cx="4.700" cy="4.700" r="3.700"/><path d="M7.500 7.500l4 4"/></svg>
<div class="abs" style="left:118px;top:463px;width:1px;height:16px;background:#cbcdd1"></div>
<div class="abs cb" style="left:128.500px;top:466.500px"></div>
<div class="abs" style="left:214.500px;top:463px;width:1px;height:16px;background:#cbcdd1"></div>
<div class="abs cb on" style="left:224.500px;top:466.500px"></div>
<svg style="left:226px;top:468.500px;width:8px;height:7px" viewBox="0 0 8 7"><path d="M.8 3.500l2.200 2.200L7.200.9" stroke="#fff" stroke-width="1.500" fill="none"/></svg>
<svg style="left:399.500px;top:468.500px;width:7px;height:6px" viewBox="0 0 7 6"><path d="M0 0h7L3.500 6z" fill="#5f6368"/></svg>
<svg style="left:420px;top:464.500px;width:17px;height:14px" viewBox="0 0 17 14" fill="none" stroke="#5f6368" stroke-width="1.400" stroke-linecap="round"><path d="M.8 4.200c4-3.800 10-3.800 14 0"/><path d="M3.200 6.800c2.700-2.500 6.500-2.500 9.200 0"/><path d="M5.700 9.300c1.300-1.100 2.900-1.100 4.200 0"/><circle cx="13" cy="10.500" r="2" fill="#5f6368" stroke="none"/><path d="M13 7.600v5.800M10.100 10.500h5.800M11 8.500l4 4M15 8.500l-4 4" stroke-width=".9"/><circle cx="13" cy="10.500" r=".8" fill="#f1f3f4" stroke="none"/></svg>
<div class="abs" style="left:444.500px;top:463px;width:1px;height:16px;background:#cbcdd1"></div>
<svg style="left:456.500px;top:466px;width:10px;height:11px" viewBox="0 0 10 11"><path d="M5 .3L9.200 4.600H6.600V8H3.400V4.600H.8z" fill="#5f6368"/><rect x=".5" y="9.400" width="9" height="1.400" fill="#5f6368"/></svg>
<svg style="left:482.500px;top:466px;width:10px;height:11px" viewBox="0 0 10 11"><path d="M5 8.300L9.200 4H6.600V.6H3.400V4H.8z" fill="#5f6368"/><rect x=".5" y="9.400" width="9" height="1.400" fill="#5f6368"/></svg>
<div class="abs" style="left:1308px;top:463px;width:1px;height:16px;background:#cbcdd1"></div>
<svg style="left:1318px;top:464.5px;width:14px;height:14px" viewBox="0 0 24 24"><path fill="#5f6368" d="M19.430 12.980c.04-.32.070-.64.070-.980s-.03-.660-.070-.980l2.110-1.650c.190-.150.240-.420.120-.640l-2-3.460c-.120-.220-.390-.300-.610-.220l-2.490 1c-.520-.400-1.080-.730-1.690-.980l-.380-2.650C14.460 2.180 14.250 2 14 2h-4c-.250 0-.460.180-.490.420l-.380 2.650c-.610.250-1.170.590-1.690.980l-2.490-1c-.230-.090-.490 0-.610.220l-2 3.460c-.130.220-.070.490.120.640l2.110 1.650c-.04.320-.070.650-.070.980s.03.660.070.980l-2.110 1.650c-.190.150-.240.420-.120.640l2 3.460c.120.220.390.300.610.220l2.490-1c.520.400 1.080.730 1.690.980l.380 2.650c.03.240.240.420.490.420h4c.250 0 .460-.180.490-.420l.380-2.650c.610-.250 1.170-.590 1.690-.980l2.490 1c.230.090.490 0 .610-.220l2-3.460c.120-.220.070-.490-.120-.640l-2.110-1.650zM12 15.500c-1.930 0-3.500-1.570-3.500-3.500s1.570-3.500 3.500-3.500 3.500 1.570 3.500 3.500-1.570 3.500-3.500 3.500z"/></svg><div class="abs" style="left:145.8px;top:464.7px;font-size:11px;line-height:15px;height:15px;color:#5f6368;white-space:nowrap;letter-spacing:-0.23px;">Preserve log</div><div class="abs" style="left:241.8px;top:464.7px;font-size:11px;line-height:15px;height:15px;color:#5f6368;white-space:nowrap;letter-spacing:-0.24px;">Disable cache</div><div class="abs" style="left:318.8px;top:464.7px;font-size:11px;line-height:15px;height:15px;color:#5f6368;white-space:nowrap;letter-spacing:0.37px;">No throttling</div>
<div class="abs" style="left:3.500px;top:487px;width:151.500px;height:17px;background:#fff"></div><div class="abs" style="left:6.5px;top:489.2px;font-size:11px;line-height:15px;height:15px;color:#757575;white-space:nowrap;letter-spacing:-0.19px;">Filter</div><div class="abs cb" style="left:167.500px;top:490.500px"></div><div class="abs" style="left:184.5px;top:489.2px;font-size:11px;line-height:15px;height:15px;color:#3c3f43;white-space:nowrap;letter-spacing:-0.00px;">Invert</div><div class="abs cb" style="left:222px;top:490.500px"></div><div class="abs" style="left:239.3px;top:489.2px;font-size:11px;line-height:15px;height:15px;color:#3c3f43;white-space:nowrap;letter-spacing:-0.30px;">Hide data URLs</div><div class="abs" style="left:319.500px;top:487px;width:18px;height:19px;border-radius:5px;background:#cfd2d6"></div><div class="abs" style="left:322.5px;top:489.2px;font-size:11px;line-height:15px;height:15px;color:#3c3f43;white-space:nowrap;letter-spacing:-0.36px;">All</div><div class="abs" style="left:342px;top:488px;width:1px;height:16px;background:#cbcdd1"></div><div class="abs" style="left:349.3px;top:489.2px;font-size:11px;line-height:15px;height:15px;color:#3c3f43;white-space:nowrap;letter-spacing:-0.32px;">Fetch/XHR</div><div class="abs" style="left:410.0px;top:489.2px;font-size:11px;line-height:15px;height:15px;color:#3c3f43;white-space:nowrap;letter-spacing:-2.84px;">JS</div><div class="abs" style="left:429.5px;top:489.2px;font-size:11px;line-height:15px;height:15px;color:#3c3f43;white-space:nowrap;letter-spacing:-2.06px;">CSS</div><div class="abs" style="left:457.5px;top:489.2px;font-size:11px;line-height:15px;height:15px;color:#3c3f43;white-space:nowrap;letter-spacing:0.23px;">Img</div><div class="abs" style="left:486.3px;top:489.2px;font-size:11px;line-height:15px;height:15px;color:#3c3f43;white-space:nowrap;letter-spacing:0.01px;">Media</div><div class="abs" style="left:526.3px;top:489.2px;font-size:11px;line-height:15px;height:15px;color:#3c3f43;white-space:nowrap;letter-spacing:-0.10px;">Font</div><div class="abs" style="left:557.5px;top:489.2px;font-size:11px;line-height:15px;height:15px;color:#3c3f43;white-space:nowrap;letter-spacing:-0.13px;">Doc</div><div class="abs" style="left:586.3px;top:489.2px;font-size:11px;line-height:15px;height:15px;color:#3c3f43;white-space:nowrap;letter-spacing:-1.52px;">WS</div><div class="abs" style="left:612.0px;top:489.2px;font-size:11px;line-height:15px;height:15px;color:#3c3f43;white-space:nowrap;letter-spacing:-0.49px;">Wasm</div><div class="abs" style="left:651.8px;top:489.2px;font-size:11px;line-height:15px;height:15px;color:#3c3f43;white-space:nowrap;letter-spacing:0.06px;">Manifest</div><div class="abs" style="left:703.3px;top:489.2px;font-size:11px;line-height:15px;height:15px;color:#3c3f43;white-space:nowrap;letter-spacing:0.12px;">Other</div><div class="abs" style="left:762.5px;top:489.2px;font-size:11px;line-height:15px;height:15px;color:#3c3f43;white-space:nowrap;letter-spacing:-0.05px;">Has blocked cookies</div><div class="abs" style="left:889.3px;top:489.2px;font-size:11px;line-height:15px;height:15px;color:#3c3f43;white-space:nowrap;letter-spacing:-0.23px;">Blocked Requests</div><div class="abs" style="left:1001.3px;top:489.2px;font-size:11px;line-height:15px;height:15px;color:#3c3f43;white-space:nowrap;letter-spacing:0.09px;">3rd-party requests</div><div class="abs cb" style="left:745.8px;top:490.500px"></div><div class="abs cb" style="left:872.5px;top:490.500px"></div><div class="abs cb" style="left:984px;top:490.500px"></div>
<div class="abs" style="left:0;top:508px;width:1340px;height:74px;background:#fff"></div><div class="abs" style="left:100px;top:508px;width:1px;height:74px;background:#e9e9e9"></div><div class="abs" style="left:60.0px;top:510.3px;font-size:9.5px;line-height:13px;height:13px;color:#333;white-space:nowrap;letter-spacing:-0.53px;">20000 ms</div><div class="abs" style="left:200.5px;top:508px;width:1px;height:74px;background:#e9e9e9"></div><div class="abs" style="left:160.5px;top:510.3px;font-size:9.5px;line-height:13px;height:13px;color:#333;white-space:nowrap;letter-spacing:-0.53px;">40000 ms</div><div class="abs" style="left:301px;top:508px;width:1px;height:74px;background:#e9e9e9"></div><div class="abs" style="left:261.0px;top:510.3px;font-size:9.5px;line-height:13px;height:13px;color:#333;white-space:nowrap;letter-spacing:-0.53px;">60000 ms</div><div class="abs" style="left:401.5px;top:508px;width:1px;height:74px;background:#e9e9e9"></div><div class="abs" style="left:361.5px;top:510.3px;font-size:9.5px;line-height:13px;height:13px;color:#333;white-space:nowrap;letter-spacing:-0.53px;">80000 ms</div><div class="abs" style="left:502px;top:508px;width:1px;height:74px;background:#e9e9e9"></div><div class="abs" style="left:456.0px;top:510.3px;font-size:9.5px;line-height:13px;height:13px;color:#333;white-space:nowrap;letter-spacing:-0.37px;">100000 ms</div><div class="abs" style="left:602px;top:508px;width:1px;height:74px;background:#e9e9e9"></div><div class="abs" style="left:556.0px;top:510.3px;font-size:9.5px;line-height:13px;height:13px;color:#333;white-space:nowrap;letter-spacing:-0.37px;">120000 ms</div><div class="abs" style="left:702.5px;top:508px;width:1px;height:74px;background:#e9e9e9"></div><div class="abs" style="left:656.5px;top:510.3px;font-size:9.5px;line-height:13px;height:13px;color:#333;white-space:nowrap;letter-spacing:-0.37px;">140000 ms</div><div class="abs" style="left:802.5px;top:508px;width:1px;height:74px;background:#e9e9e9"></div><div class="abs" style="left:756.5px;top:510.3px;font-size:9.5px;line-height:13px;height:13px;color:#333;white-space:nowrap;letter-spacing:-0.37px;">160000 ms</div><div class="abs" style="left:902.5px;top:508px;width:1px;height:74px;background:#e9e9e9"></div><div class="abs" style="left:856.5px;top:510.3px;font-size:9.5px;line-height:13px;height:13px;color:#333;white-space:nowrap;letter-spacing:-0.37px;">180000 ms</div><div class="abs" style="left:1003px;top:508px;width:1px;height:74px;background:#e9e9e9"></div><div class="abs" style="left:957.0px;top:510.3px;font-size:9.5px;line-height:13px;height:13px;color:#333;white-space:nowrap;letter-spacing:-0.37px;">200000 ms</div><div class="abs" style="left:1103.5px;top:508px;width:1px;height:74px;background:#e9e9e9"></div><div class="abs" style="left:1057.5px;top:510.3px;font-size:9.5px;line-height:13px;height:13px;color:#333;white-space:nowrap;letter-spacing:-0.37px;">220000 ms</div><div class="abs" style="left:1204px;top:508px;width:1px;height:74px;background:#e9e9e9"></div><div class="abs" style="left:1158.0px;top:510.3px;font-size:9.5px;line-height:13px;height:13px;color:#333;white-space:nowrap;letter-spacing:-0.37px;">240000 ms</div><div class="abs" style="left:1304px;top:508px;width:1px;height:74px;background:#e9e9e9"></div><div class="abs" style="left:1258.0px;top:510.3px;font-size:9.5px;line-height:13px;height:13px;color:#333;white-space:nowrap;letter-spacing:-0.37px;">260000 ms</div>
<div class="abs" style="left:0;top:508px;width:2px;height:17px;background:#8a8a8a"></div><div class="abs" style="left:1336px;top:508px;width:3px;height:17px;background:#8a8a8a"></div><div class="abs" style="left:2px;top:534px;width:79px;height:2.300px;background:#2a9fd8"></div><div class="abs" style="left:2px;top:534px;width:5px;height:2.300px;background:#a9dcf2"></div><div class="abs" style="left:8px;top:534px;width:1.500px;height:2.300px;background:#e3f3fb"></div><div class="abs" style="left:12px;top:534px;width:1px;height:2.300px;background:#d5eefa"></div><div class="abs" style="left:22px;top:534px;width:1px;height:2.300px;background:#bfe5f6"></div><div class="abs" style="left:86px;top:534px;width:2.500px;height:2.300px;background:#6cc493"></div><div class="abs" style="left:3.500px;top:531px;width:17px;height:1.300px;background:repeating-linear-gradient(90deg,#444 0 1.200px,transparent 1.200px 2.100px);opacity:.55"></div><div class="abs" style="left:5.500px;top:539.500px;width:7.500px;height:2px;background:#888;opacity:.7"></div><div class="abs" style="left:14.500px;top:539.500px;width:1.200px;height:2px;background:#bfe0ee"></div><div class="abs" style="left:5.500px;top:543px;width:2.500px;height:1.300px;background:#555;opacity:.8"></div><div class="abs" style="left:9px;top:543px;width:1.500px;height:1.500px;background:#6c9"></div><div class="abs" style="left:5.500px;top:545.500px;width:2px;height:2px;background:#777"></div><div class="abs" style="left:9px;top:545.500px;width:5.500px;height:2px;background:#b43fc8"></div><div class="abs" style="left:16px;top:545.500px;width:1.200px;height:2px;background:#9fd2ee"></div><div class="abs" style="left:46.600px;top:526px;width:2px;height:56px;background:#6c3a7b"></div><div class="abs sg" style="left:128px;top:551px;width:19px"></div><div class="abs sg" style="left:178px;top:553.5px;width:21px"></div><div class="abs sg" style="left:228px;top:556.5px;width:21px"></div><div class="abs sg" style="left:278px;top:559px;width:21px"></div><div class="abs sg" style="left:328px;top:562px;width:21px"></div><div class="abs sg" style="left:378px;top:565px;width:21px"></div><div class="abs sg" style="left:428px;top:567.5px;width:21px"></div><div class="abs sg" style="left:478px;top:570.5px;width:21px"></div><div class="abs sg" style="left:528px;top:573px;width:21px"></div><div class="abs sg" style="left:578px;top:576px;width:21px"></div><div class="abs sg" style="left:628px;top:578.5px;width:21px"></div><div class="abs sg" style="left:679px;top:534px;width:16px"></div><div class="abs sg" style="left:730px;top:537px;width:17.5px"></div><div class="abs sg" style="left:829px;top:539.5px;width:19px"></div><div class="abs sg" style="left:880px;top:542.5px;width:21px"></div><div class="abs sg" style="left:930px;top:545.5px;width:18.5px"></div><div class="abs sg" style="left:980px;top:548px;width:16.5px"></div><div class="abs sg" style="left:1030px;top:551px;width:19px"></div><div class="abs sg" style="left:1080px;top:553.5px;width:20px"></div><div class="abs sg" style="left:1131px;top:556.5px;width:17.5px"></div><div class="abs" style="left:780px;top:539.500px;width:38px;height:2px;background:linear-gradient(90deg,#9fb5ad,#5aa57c 30%,#2f9a5f 55%,#7fb59a 70%,#2f9a5f 85%,#5aa57c)"></div>
<div class="abs" style="left:0;top:582px;width:1340px;height:1.500px;background:#c9c9c9"></div><div class="abs" style="left:0;top:583.500px;width:1340px;height:25px;background:#f1f3f4"></div><div class="abs" style="left:684px;top:583.500px;width:213.500px;height:25px;background:#c9cdd1"></div><div class="abs" style="left:0;top:608px;width:1340px;height:1px;background:#cbcdd1"></div><div class="abs" style="left:0;top:609px;width:1324px;height:112px;background:#fff"></div><div class="abs" style="left:0;top:609px;width:1324px;height:14.0px;background:#f5f5f5"></div><div class="abs" style="left:0;top:642.5px;width:1324px;height:19.5px;background:#f5f5f5"></div><div class="abs" style="left:0;top:681.5px;width:1324px;height:19.5px;background:#f5f5f5"></div><div class="abs" style="left:427.5px;top:583.500px;width:1px;height:137.500px;background:#cdcdcd"></div><div class="abs" style="left:555.5px;top:583.500px;width:1px;height:137.500px;background:#cdcdcd"></div><div class="abs" style="left:683.5px;top:583.500px;width:1px;height:137.500px;background:#cdcdcd"></div><div class="abs" style="left:897.5px;top:583.500px;width:1px;height:137.500px;background:#cdcdcd"></div><div class="abs" style="left:1025px;top:583.500px;width:1px;height:137.500px;background:#cdcdcd"></div><div class="abs" style="left:1153.5px;top:583.500px;width:1px;height:137.500px;background:#cdcdcd"></div><div class="abs" style="left:0;top:525px;width:1px;height:196px;background:#c9cdd1"></div><div class="abs" style="left:1227.4px;top:609px;width:1px;height:112px;background:#e6e6e6"></div><div class="abs" style="left:1301.8px;top:609px;width:1px;height:112px;background:#e6e6e6"></div><div class="abs" style="left:1164.300px;top:609px;width:1.600px;height:112px;background:#7d4457"></div>
<div class="abs" style="left:5.0px;top:590.0px;font-size:11px;line-height:15px;height:15px;color:#333;white-space:nowrap;letter-spacing:-0.18px;">Name</div><div class="abs" style="left:432.5px;top:590.0px;font-size:11px;line-height:15px;height:15px;color:#333;white-space:nowrap;letter-spacing:-0.44px;">Status</div><div class="abs" style="left:560.0px;top:590.0px;font-size:11px;line-height:15px;height:15px;color:#333;white-space:nowrap;letter-spacing:-0.45px;">Type</div><div class="abs" style="left:688.0px;top:590.0px;font-size:11px;line-height:15px;height:15px;color:#333;white-space:nowrap;letter-spacing:0.24px;">Initiator</div><div class="abs" style="left:901.5px;top:590.0px;font-size:11px;line-height:15px;height:15px;color:#333;white-space:nowrap;letter-spacing:-0.80px;">Size</div><div class="abs" style="left:1029.5px;top:590.0px;font-size:11px;line-height:15px;height:15px;color:#333;white-space:nowrap;letter-spacing:-0.18px;">Time</div><div class="abs" style="left:1158.0px;top:590.0px;font-size:11px;line-height:15px;height:15px;color:#333;white-space:nowrap;letter-spacing:0.00px;">Waterfall</div><svg style="left:1322px;top:593px;width:8px;height:6px" viewBox="0 0 8 6"><path d="M0 6L4 0l4 6z" fill="#6e6e6e"/></svg>
<div class="abs" style="left:0;top:609px;width:1324px;height:112px;overflow:hidden"><div class="abs fi" style="left:8px;top:-0.20000000000004547px"></div><div class="abs" style="left:24.5px;top:-1.5px;font-size:11px;line-height:15px;height:15px;color:#303030;white-space:nowrap;letter-spacing:0.19px;">hourly.php</div><div class="abs" style="left:432.5px;top:-1.5px;font-size:11px;line-height:15px;height:15px;color:#303030;white-space:nowrap;letter-spacing:-0.43px;">200</div><div class="abs" style="left:560.0px;top:-1.5px;font-size:11px;line-height:15px;height:15px;color:#303030;white-space:nowrap;letter-spacing:-0.14px;">xhr</div><div class="abs" style="left:688.0px;top:-1.5px;font-size:11px;line-height:15px;height:15px;color:#303030;white-space:nowrap;letter-spacing:-0.01px;text-decoration:underline;text-underline-offset:1.500px;">jquery.min.js:2</div><div class="abs" style="left:994.0px;top:-1.5px;font-size:11px;line-height:15px;height:15px;color:#303030;white-space:nowrap;letter-spacing:-0.69px;">214 B</div><div class="abs" style="left:1121.0px;top:-1.5px;font-size:11px;line-height:15px;height:15px;color:#303030;white-space:nowrap;letter-spacing:-0.39px;">2.35 s</div>
<div class="abs fi" style="left:8px;top:19.299999999999955px"></div><div class="abs" style="left:24.5px;top:18.0px;font-size:11px;line-height:15px;height:15px;color:#303030;white-space:nowrap;letter-spacing:0.19px;">hourly.php</div><div class="abs" style="left:432.5px;top:18.0px;font-size:11px;line-height:15px;height:15px;color:#303030;white-space:nowrap;letter-spacing:-0.43px;">200</div><div class="abs" style="left:560.0px;top:18.0px;font-size:11px;line-height:15px;height:15px;color:#303030;white-space:nowrap;letter-spacing:-0.14px;">xhr</div><div class="abs" style="left:688.0px;top:18.0px;font-size:11px;line-height:15px;height:15px;color:#303030;white-space:nowrap;letter-spacing:-0.01px;text-decoration:underline;text-underline-offset:1.500px;">jquery.min.js:2</div><div class="abs" style="left:994.0px;top:18.0px;font-size:11px;line-height:15px;height:15px;color:#303030;white-space:nowrap;letter-spacing:-0.69px;">124 B</div><div class="abs" style="left:1121.0px;top:18.0px;font-size:11px;line-height:15px;height:15px;color:#303030;white-space:nowrap;letter-spacing:-0.39px;">1.99 s</div>
<div class="abs fi" style="left:8px;top:38.799999999999955px"></div><div class="abs" style="left:24.5px;top:37.5px;font-size:11px;line-height:15px;height:15px;color:#303030;white-space:nowrap;letter-spacing:0.19px;">hourly.php</div><div class="abs" style="left:432.5px;top:37.5px;font-size:11px;line-height:15px;height:15px;color:#303030;white-space:nowrap;letter-spacing:-0.43px;">200</div><div class="abs" style="left:560.0px;top:37.5px;font-size:11px;line-height:15px;height:15px;color:#303030;white-space:nowrap;letter-spacing:-0.14px;">xhr</div><div class="abs" style="left:688.0px;top:37.5px;font-size:11px;line-height:15px;height:15px;color:#303030;white-space:nowrap;letter-spacing:-0.01px;text-decoration:underline;text-underline-offset:1.500px;">jquery.min.js:2</div><div class="abs" style="left:994.0px;top:37.5px;font-size:11px;line-height:15px;height:15px;color:#303030;white-space:nowrap;letter-spacing:-0.69px;">214 B</div><div class="abs" style="left:1121.0px;top:37.5px;font-size:11px;line-height:15px;height:15px;color:#303030;white-space:nowrap;letter-spacing:-0.39px;">2.63 s</div>
<div class="abs fi" style="left:8px;top:58.299999999999955px"></div><div class="abs" style="left:24.5px;top:57.0px;font-size:11px;line-height:15px;height:15px;color:#303030;white-space:nowrap;letter-spacing:0.19px;">hourly.php</div><div class="abs" style="left:432.5px;top:57.0px;font-size:11px;line-height:15px;height:15px;color:#303030;white-space:nowrap;letter-spacing:-0.43px;">200</div><div class="abs" style="left:560.0px;top:57.0px;font-size:11px;line-height:15px;height:15px;color:#303030;white-space:nowrap;letter-spacing:-0.14px;">xhr</div><div class="abs" style="left:688.0px;top:57.0px;font-size:11px;line-height:15px;height:15px;color:#303030;white-space:nowrap;letter-spacing:-0.01px;text-decoration:underline;text-underline-offset:1.500px;">jquery.min.js:2</div><div class="abs" style="left:994.0px;top:57.0px;font-size:11px;line-height:15px;height:15px;color:#303030;white-space:nowrap;letter-spacing:-0.69px;">124 B</div><div class="abs" style="left:1121.0px;top:57.0px;font-size:11px;line-height:15px;height:15px;color:#303030;white-space:nowrap;letter-spacing:-0.39px;">2.24 s</div>
<div class="abs fi" style="left:8px;top:77.79999999999995px"></div><div class="abs" style="left:24.5px;top:76.5px;font-size:11px;line-height:15px;height:15px;color:#303030;white-space:nowrap;letter-spacing:0.19px;">hourly.php</div><div class="abs" style="left:432.5px;top:76.5px;font-size:11px;line-height:15px;height:15px;color:#303030;white-space:nowrap;letter-spacing:-0.43px;">200</div><div class="abs" style="left:560.0px;top:76.5px;font-size:11px;line-height:15px;height:15px;color:#303030;white-space:nowrap;letter-spacing:-0.14px;">xhr</div><div class="abs" style="left:688.0px;top:76.5px;font-size:11px;line-height:15px;height:15px;color:#303030;white-space:nowrap;letter-spacing:-0.01px;text-decoration:underline;text-underline-offset:1.500px;">jquery.min.js:2</div><div class="abs" style="left:994.0px;top:76.5px;font-size:11px;line-height:15px;height:15px;color:#303030;white-space:nowrap;letter-spacing:-0.69px;">214 B</div><div class="abs" style="left:1121.0px;top:76.5px;font-size:11px;line-height:15px;height:15px;color:#303030;white-space:nowrap;letter-spacing:-0.39px;">2.46 s</div>
<div class="abs fi" style="left:8px;top:97.29999999999995px"></div><div class="abs" style="left:24.5px;top:96.0px;font-size:11px;line-height:15px;height:15px;color:#303030;white-space:nowrap;letter-spacing:0.19px;">hourly.php</div><div class="abs" style="left:432.5px;top:96.0px;font-size:11px;line-height:15px;height:15px;color:#303030;white-space:nowrap;letter-spacing:-0.43px;">200</div><div class="abs" style="left:560.0px;top:96.0px;font-size:11px;line-height:15px;height:15px;color:#303030;white-space:nowrap;letter-spacing:-0.14px;">xhr</div><div class="abs" style="left:688.0px;top:96.0px;font-size:11px;line-height:15px;height:15px;color:#303030;white-space:nowrap;letter-spacing:-0.01px;text-decoration:underline;text-underline-offset:1.500px;">jquery.min.js:2</div><div class="abs" style="left:994.0px;top:96.0px;font-size:11px;line-height:15px;height:15px;color:#303030;white-space:nowrap;letter-spacing:-0.69px;">124 B</div><div class="abs" style="left:1121.0px;top:96.0px;font-size:11px;line-height:15px;height:15px;color:#303030;white-space:nowrap;letter-spacing:-0.39px;">1.82 s</div>
</div>
<div class="abs" style="left:1305.5px;top:608.8px;width:1px;height:9.200000000000045px;background:#c9c9c9"></div><div class="abs" style="left:1308.5px;top:608.8px;width:1.6px;height:9.200000000000045px;background:#d9534f"></div><div class="abs" style="left:1312px;top:608.8px;width:2.2px;height:9.200000000000045px;background:#1ea1e6"></div><div class="abs" style="left:1306.5px;top:630px;width:1px;height:6px;background:#c9c9c9"></div><div class="abs" style="left:1310px;top:628px;width:2.2px;height:9.600000000000023px;background:#1ea1e6"></div><div class="abs" style="left:1312.5px;top:649.5px;width:1px;height:6.0px;background:#c9c9c9"></div><div class="abs" style="left:1319.5px;top:647.5px;width:2.2px;height:9.5px;background:#1ea1e6"></div><div class="abs" style="left:1313.5px;top:669px;width:1px;height:6px;background:#c9c9c9"></div><div class="abs" style="left:1317.6px;top:667px;width:2.2px;height:9.700000000000045px;background:#1ea1e6"></div><div class="abs" style="left:1320px;top:689px;width:1px;height:4.5px;background:#d0d0d0"></div><div class="abs" style="left:1320.7px;top:709px;width:1px;height:4px;background:#d0d0d0"></div><div class="abs" style="left:1324px;top:609px;width:15px;height:112px;background:#f1f1f1"></div>
<div class="abs" style="left:1339px;top:583.500px;width:1px;height:137.500px;background:#d0d0d0"></div>
<div class="abs" style="left:1325.500px;top:689px;width:11.500px;height:16px;background:#c1c1c1"></div>
<svg style="left:1327.500px;top:615.500px;width:7px;height:4px" viewBox="0 0 7 4"><path d="M0 4L3.500 0 7 4z" fill="#505050"/></svg>
<svg style="left:1327.500px;top:710.500px;width:7px;height:4px" viewBox="0 0 7 4"><path d="M0 0L3.500 4 7 0z" fill="#a3a3a3"/></svg>
<div class="abs" style="left:0;top:721px;width:1340px;height:1px;background:#cbcdd1"></div><div class="abs" style="left:0;top:722px;width:1340px;height:24.500px;background:#f1f3f4"></div><div class="abs" style="left:10.4px;top:727.1px;font-size:11px;line-height:15px;height:15px;color:#5f6368;white-space:nowrap;letter-spacing:-0.19px;">82 requests</div><div class="abs" style="left:84.4px;top:727.1px;font-size:11px;line-height:15px;height:15px;color:#5f6368;white-space:nowrap;letter-spacing:-0.03px;">2.5 MB transferred</div><div class="abs" style="left:193.4px;top:727.1px;font-size:11px;line-height:15px;height:15px;color:#5f6368;white-space:nowrap;letter-spacing:-0.17px;">3.7 MB resources</div><div class="abs" style="left:295.4px;top:727.1px;font-size:11px;line-height:15px;height:15px;color:#5f6368;white-space:nowrap;letter-spacing:-0.21px;">Finish: 3.8 min</div><div class="abs" style="left:382.4px;top:727.1px;font-size:11px;line-height:15px;height:15px;color:#1967c9;white-space:nowrap;letter-spacing:-0.06px;">DOMContentLoaded: 9.29 s</div><div class="abs" style="left:536.4px;top:727.1px;font-size:11px;line-height:15px;height:15px;color:#c5342c;white-space:nowrap;letter-spacing:-0.27px;">Load: 9.43 s</div><div class="abs" style="left:75px;top:727px;width:1px;height:14px;background:#cbcdd1"></div><div class="abs" style="left:184px;top:727px;width:1px;height:14px;background:#cbcdd1"></div><div class="abs" style="left:286px;top:727px;width:1px;height:14px;background:#cbcdd1"></div><div class="abs" style="left:373px;top:727px;width:1px;height:14px;background:#cbcdd1"></div><div class="abs" style="left:527px;top:727px;width:1px;height:14px;background:#cbcdd1"></div><svg style="left:802.200px;top:590.300px;width:12px;height:18px" viewBox="0 0 12 18"><path d="M.6 .8V15.400L4 12.300l2.700 5.200 2-1L6.100 11.500H10.600z" fill="#fff" stroke="#20232a" stroke-width="1.100" stroke-linejoin="round"/></svg>
<style>
#dev{background:#f1f3f4}
.cb{width:11px;height:11px;border:1px solid #767676;border-radius:2.500px;background:#fff}
.cb.on{background:#1a73e8;border-color:#1a73e8}
.sg{height:2px;background:repeating-linear-gradient(90deg,#9fb3ac 0 3px,#6fb08e 3px 5px,#c5d0cc 5px 6px);opacity:.75}
.fi{width:10px;height:10.700px;border:1px solid #aeaeae;border-radius:1.500px;background:#fff}
</style>
<div id="dl"></div>
<div id="task"></div>
<svg style="left:18.8px;top:765px;width:15px;height:15px" viewBox="0 0 15 15"><path d="M3 .3h6.500l3 3V14.700H3z" fill="#f4f4f4"/><path d="M9.500 .3v3h3z" fill="#c9c9c9"/><path d="M4.500 2h3.500M4.500 3.300h3" stroke="#c4c4c4" stroke-width=".6"/><rect x=".2" y="4.300" width="14.600" height="9" rx="1.600" fill="#e02b2b"/><text x="7.500" y="11" font-family="Liberation Sans,sans-serif" font-size="6.200" font-weight="700" fill="#fff" text-anchor="middle">PDF</text></svg><div class="abs" style="left:45.8px;top:765.0px;font-size:13px;line-height:18px;height:18px;color:#fff;white-space:nowrap;letter-spacing:-0.47px;">Individual ( Consu....pdf</div><svg style="left:193px;top:770.500px;width:10px;height:7px" viewBox="0 0 10 7"><path d="M.8 6L5 1.600 9.200 6" stroke="#c3cfe4" stroke-width="1.500" fill="none"/></svg><div class="abs" style="left:220px;top:753px;width:1px;height:41px;background:#3d5273"></div>
<svg style="left:235.8px;top:765px;width:15px;height:15px" viewBox="0 0 15 15"><path d="M3 .3h6.500l3 3V14.700H3z" fill="#f4f4f4"/><path d="M9.500 .3v3h3z" fill="#c9c9c9"/><path d="M4.500 2h3.500M4.500 3.300h3" stroke="#c4c4c4" stroke-width=".6"/><rect x=".2" y="4.300" width="14.600" height="9" rx="1.600" fill="#e02b2b"/><text x="7.500" y="11" font-family="Liberation Sans,sans-serif" font-size="6.200" font-weight="700" fill="#fff" text-anchor="middle">PDF</text></svg><div class="abs" style="left:262.5px;top:765.0px;font-size:13px;line-height:18px;height:18px;color:#fff;white-space:nowrap;letter-spacing:-0.48px;">Individual ( Consu....pdf</div><svg style="left:410px;top:770.500px;width:10px;height:7px" viewBox="0 0 10 7"><path d="M.8 6L5 1.600 9.200 6" stroke="#c3cfe4" stroke-width="1.500" fill="none"/></svg><div class="abs" style="left:436.500px;top:753px;width:1px;height:41px;background:#3d5273"></div>
<svg style="left:453.800px;top:765px;width:12px;height:15px" viewBox="0 0 12 15"><path d="M.3 .3h8l3.400 3.400v11H.3z" fill="#f4f6fa"/><path d="M8.300 .3v3.400h3.400z" fill="#c3c9d4"/><rect x="2.800" y="6.200" width="6" height="5.800" fill="#2a78d2"/><path d="M2.800 12l2.100-2.800 1.500 1.700 1-1 1.400 2.100z" fill="#9fcbf5"/></svg>
<div class="abs" style="left:478.800px;top:752.200px;width:382.200px;height:39.200px;background:#f5f6fc"></div>
<div class="abs" style="left:488.500px;top:766px;width:1.500px;height:10px;background:#b9bcc2"></div><div class="abs" style="left:492.500px;top:766px;width:1.500px;height:10px;background:#b9bcc2"></div>
<div class="abs" style="left:725px;top:757px;width:94px;height:30px;border-radius:3.500px;background:#1a73e8"></div>
<div class="abs" style="left:869.800px;top:753px;width:1px;height:41px;background:#3d5273"></div>
<div class="abs" style="left:1234.500px;top:758px;width:72.500px;height:29.500px;border:1px solid #93a4bf;border-radius:4px;background:#213d66"></div>
<svg style="left:1318.500px;top:768.500px;width:9px;height:9px" viewBox="0 0 9 9"><path d="M.5.500l8 8M8.500.500l-8 8" stroke="#d3dcec" stroke-width="1.400" fill="none"/></svg>
<div class="abs" style="left:503.8px;top:764.0px;font-size:11.6px;line-height:16px;height:16px;color:#333;white-space:nowrap;letter-spacing:-0.31px;">srilance.softileo.com is sharing your screen.</div><div class="abs" style="left:740.0px;top:764.0px;font-size:11.6px;line-height:16px;height:16px;color:#fff;white-space:nowrap;letter-spacing:-0.72px;font-weight:700;">Stop sharing</div><div class="abs" style="left:828.8px;top:763.5px;font-size:12px;line-height:17px;height:17px;color:#4a6fc5;white-space:nowrap;letter-spacing:-0.73px;">Hide</div><div class="abs" style="left:1249.3px;top:764.5px;font-size:11.5px;line-height:16px;height:16px;color:#fff;white-space:nowrap;letter-spacing:-0.66px;font-weight:700;">Show all</div>
<svg style="left:15px;top:811px;width:15px;height:15px" viewBox="0 0 15 15" fill="#fff"><path d="M0 2.100L6.100 1.300v5.900H0zM6.900 1.200L15 0v7.200H6.900zM0 7.900h6.100v5.900L0 12.900zM6.900 7.900H15V15l-8.100-1.100z"/></svg>
<div class="abs" style="left:45px;top:800.500px;width:319.500px;height:36px;background:#f2f2f2;border-top:1px solid #dedede"></div>
<svg style="left:56px;top:811px;width:15px;height:15px" viewBox="0 0 15 15" fill="none" stroke="#2e2e2e" stroke-width="1.300"><circle cx="9" cy="5.700" r="4.600"/><path d="M5.700 9L.8 14"/></svg>
<svg style="left:380px;top:811.500px;width:15px;height:15px" viewBox="0 0 15 15"><circle cx="7.500" cy="7.500" r="6.200" fill="none" stroke="#fff" stroke-width="1.900"/></svg>
<svg style="left:424px;top:811px;width:16px;height:14px" viewBox="0 0 16 14" fill="none" stroke="#f2f2f2" stroke-width="1.100"><rect x="2" y="4.600" width="8" height="5.400"/><path d="M.6 .6h10.800M.6 13.400h10.800M.6 .6v2.400M.6 13.400v-2.400M11.400 .6v2.400M11.400 13.400v-2.400"/><path d="M14 .3v13.400" stroke-width="1.200"/><rect x="12.900" y="4.300" width="2.200" height="2.200" fill="#f2f2f2" stroke="none"/></svg>
<div class="abs" style="left:82.5px;top:808.5px;font-size:14.5px;line-height:20px;height:20px;color:#3a3a3a;white-space:nowrap;letter-spacing:-0.55px;">Type here to search</div><div class="abs" style="left:460.8px;top:835px;width:36.69999999999999px;height:2px;background:#8ec5ee"></div><div class="abs" style="left:468px;top:807px;width:22.500px;height:22.500px;border-radius:3px;background:#474747"></div>
<svg style="left:472.400px;top:809.800px;width:13.600px;height:16.400px" viewBox="0 0 14 17.500"><defs><linearGradient id="sbl" x1="0" y1="0" x2="0" y2="1"><stop offset="0" stop-color="#ffa41a"/><stop offset="1" stop-color="#f08c00"/></linearGradient></defs><path d="M13.500 0L.5 4.200V8.600L9 11.300.5 14v3.500l13-4.200V8.900L5 6.200l8.500-2.700z" fill="url(#sbl)"/></svg>
<div class="abs" style="left:506px;top:835px;width:37px;height:2px;background:#8ec5ee"></div><svg style="left:514px;top:809px;width:21px;height:18px" viewBox="0 0 21 18"><path d="M.5 2c0-.6.400-1 1-1h6l1.800 1.800H19.500c.6 0 1 .4 1 1V4.500H.5z" fill="#e9a91d"/><rect x=".5" y="3.800" width="20" height="12.700" rx=".8" fill="#fbd15b"/><rect x=".5" y="11.500" width="20" height="5" fill="#f2c23f"/><path d="M5.500 17V11.500c0-.5.400-.9.900-.9h8.200c.5 0 .9.400.9.900V17h-2.500v-3.700h-5V17z" fill="#3c94e0"/></svg>
<svg style="left:560px;top:808px;width:23px;height:21px" viewBox="0 0 23 21"><ellipse cx="10.500" cy="7.500" rx="9.500" ry="6.300" fill="#ececec" stroke="#c73a3a" stroke-width="1.300" transform="rotate(-14 10.500 7.500)"/><path d="M2 12.300c3 2.400 8.400 2.600 12.500.8" stroke="#8d8d8d" stroke-width="2.200" fill="none"/><path d="M12.300 4.500l3.200 9.500M16.800 5.500L12 13" stroke="#b9b9b9" stroke-width="1.200"/><circle cx="12.500" cy="16.800" r="2.300" fill="none" stroke="#2a8de0" stroke-width="1.500"/><circle cx="17.800" cy="15.300" r="2.300" fill="none" stroke="#2a8de0" stroke-width="1.500"/></svg>
<div class="abs" style="left:594px;top:800.500px;width:41.500px;height:34.500px;background:#4b4b4c"></div><div class="abs" style="left:636px;top:800.500px;width:2.500px;height:34.500px;background:#3a3a3b"></div><div class="abs" style="left:594px;top:835px;width:44.799999999999955px;height:2px;background:#8ec5ee"></div><svg style="left:605px;top:807px;width:24px;height:24px" viewBox="0 0 24 24"><circle cx="11" cy="11" r="10.500" fill="#fff"/><path d="M11 .5A10.500 10.500 0 0 1 20.100 5.750H11a5.250 5.250 0 0 0-4.550 2.630L2.400 4.960A10.480 10.480 0 0 1 11 .5z" fill="#e33b2e"/><path d="M20.100 5.750A10.500 10.500 0 0 1 11 21.500l4.550-7.880A5.250 5.250 0 0 0 15.550 8.400V5.750z" fill="#f7c719"/><path d="M11 21.500A10.500 10.500 0 0 1 2.400 4.960l4.050 7.020A5.250 5.250 0 0 0 11 16.250l2.200-.6z" fill="#2da94f"/><circle cx="11" cy="11" r="4.300" fill="#4a8af4" stroke="#fff" stroke-width="1.200"/><circle cx="16.600" cy="17.300" r="6.900" fill="#4b4b4c"/><circle cx="16.600" cy="17.300" r="6" fill="#dadada"/><circle cx="16.600" cy="15.300" r="2.100" fill="#5a5d66"/><path d="M12.600 21c0-2 2.600-2.800 4-2.800s4 .8 4 2.800v.4h-8z" fill="#5a5d66"/></svg><div class="abs" style="left:643px;top:835px;width:37px;height:2px;background:#8ec5ee"></div><div class="abs" style="left:650.800px;top:807px;width:21.700px;height:22px;background:#a30d0d;border:1px solid #7d0a0a"></div><div class="abs" style="left:653.5px;top:806.0px;font-size:17px;line-height:24px;height:24px;color:#fff;white-space:nowrap;letter-spacing:-2.38px;font-weight:700;font-style:italic;">Fz</div><svg style="left:696.500px;top:807.500px;width:20px;height:20px" viewBox="0 0 20 20"><defs><linearGradient id="wdg" x1="0" y1="0" x2="0" y2="1"><stop offset="0" stop-color="#ffffff"/><stop offset="1" stop-color="#cfe0f7"/></linearGradient></defs><path d="M1 .5h15l3.500 3.500V19.500H1z" fill="url(#wdg)" stroke="#a9c0e2" stroke-width=".6"/><path d="M3 15.500h14M3 17.500h14" stroke="#9dbbe6" stroke-width="1"/><path d="M13 12.500l5.500 2.500-4.500 2z" fill="#f4f7fc" stroke="#b5c6de" stroke-width=".5"/></svg><div class="abs" style="left:697.5px;top:806.1px;font-size:15.5px;line-height:22px;height:22px;color:#1f5fc0;white-space:nowrap;letter-spacing:0.00px;font-weight:700;">W</div><div class="abs" style="left:730.500px;top:800.500px;width:44.500px;height:34.500px;background:#a5602a"></div><div class="abs" style="left:730.5px;top:835px;width:44.5px;height:2px;background:#f57c00"></div><svg style="left:742.400px;top:808px;width:20.600px;height:20.600px" viewBox="0 0 21 21"><defs><linearGradient id="stk" x1="0" y1="0" x2="1" y2="1"><stop offset="0" stop-color="#ffe01a"/><stop offset="1" stop-color="#f6c21c"/></linearGradient></defs><rect width="21" height="21" rx="1.500" fill="url(#stk)"/><path d="M10.700 10.200h9.300v8.300z" fill="#3b3a33"/></svg><div class="abs" style="left:780px;top:835px;width:37px;height:2px;background:#8ec5ee"></div><svg style="left:788px;top:807px;width:24px;height:24px" viewBox="0 0 24 24"><circle cx="11" cy="11" r="10.500" fill="#fff"/><path d="M11 .5A10.500 10.500 0 0 1 20.100 5.750H11a5.250 5.250 0 0 0-4.550 2.630L2.400 4.960A10.480 10.480 0 0 1 11 .5z" fill="#e33b2e"/><path d="M20.100 5.750A10.500 10.500 0 0 1 11 21.500l4.550-7.880A5.250 5.250 0 0 0 15.550 8.400V5.750z" fill="#f7c719"/><path d="M11 21.500A10.500 10.500 0 0 1 2.400 4.960l4.050 7.020A5.250 5.250 0 0 0 11 16.250l2.200-.6z" fill="#2da94f"/><circle cx="11" cy="11" r="4.300" fill="#4a8af4" stroke="#fff" stroke-width="1.200"/><circle cx="16.600" cy="17.300" r="6.900" fill="#242424"/><circle cx="16.600" cy="17.300" r="6" fill="#242424"/><circle cx="16.600" cy="15.300" r="2.100" fill="#fff"/><path d="M12.600 21c0-2 2.600-2.800 4-2.800s4 .8 4 2.800v.4h-8z" fill="#fff"/></svg><svg style="left:1056px;top:810px;width:18px;height:18px" viewBox="0 0 18 18"><defs><radialGradient id="sun" cx=".4" cy=".3" r=".8"><stop offset="0" stop-color="#ffe36b"/><stop offset=".6" stop-color="#fdc02c"/><stop offset="1" stop-color="#f39a1e"/></radialGradient></defs><circle cx="9" cy="9" r="8.700" fill="url(#sun)"/></svg>
<svg style="left:1169.500px;top:814px;width:12px;height:8px" viewBox="0 0 12 8"><path d="M.8 7L6 1.500 11.200 7" stroke="#fff" stroke-width="1.300" fill="none"/></svg>
<svg style="left:1190px;top:811px;width:16px;height:15px" viewBox="0 0 16 15" fill="none" stroke="#fff" stroke-width="1"><rect x="3.500" y="2.500" width="11" height="7"/><path d="M9 9.500v2.500M6 12.500h6.500"/><rect x=".5" y=".5" width="3.500" height="4.500" fill="#242424"/><path d="M1.500 5v3h2"/></svg>
<svg style="left:1211px;top:811px;width:17px;height:14px" viewBox="0 0 17 14" fill="none" stroke="#fff" stroke-width="1"><path d="M.8 4.800h2.700L7 1.500v11L3.500 9.200H.8z"/><path d="M9.300 5c.9 1.100.9 2.900 0 4M11.300 3.500c1.700 2 1.700 5 0 7M13.300 2c2.500 2.900 2.500 7.100 0 10"/></svg>
<svg style="left:1301px;top:811px;width:22px;height:22px" viewBox="0 0 22 22"><path d="M.5 .5h15v11H7.500l-3 3v-3h-4z" fill="#fff"/><path d="M3 3.500h10M3 5.800h10M3 8h10" stroke="#242424" stroke-width=".9"/><circle cx="14.800" cy="14.500" r="7.300" fill="#242424" stroke="#8a8a8a" stroke-width="1"/></svg>
<div class="abs" style="left:1338.500px;top:800.500px;width:1px;height:36.500px;background:#6a6a6a"></div>
<div class="abs" style="left:1083.8px;top:810.2px;font-size:13px;line-height:18px;height:18px;color:#f2f2f2;white-space:nowrap;letter-spacing:-0.95px;">32°C</div><div class="abs" style="left:1118.8px;top:810.2px;font-size:13px;line-height:18px;height:18px;color:#f2f2f2;white-space:nowrap;letter-spacing:-0.46px;">Sunny</div><div class="abs" style="left:1242.0px;top:802.5px;font-size:11px;line-height:15px;height:15px;color:#f2f2f2;white-space:nowrap;letter-spacing:-0.49px;">5:55 PM</div><div class="abs" style="left:1237.5px;top:819.0px;font-size:11px;line-height:15px;height:15px;color:#f2f2f2;white-space:nowrap;letter-spacing:-0.33px;">10/9/2021</div><div class="abs" style="left:1312.8px;top:818.0px;font-size:10.5px;line-height:15px;height:15px;color:#fff;white-space:nowrap;letter-spacing:0.00px;font-weight:700;">2</div></body>
</html>
